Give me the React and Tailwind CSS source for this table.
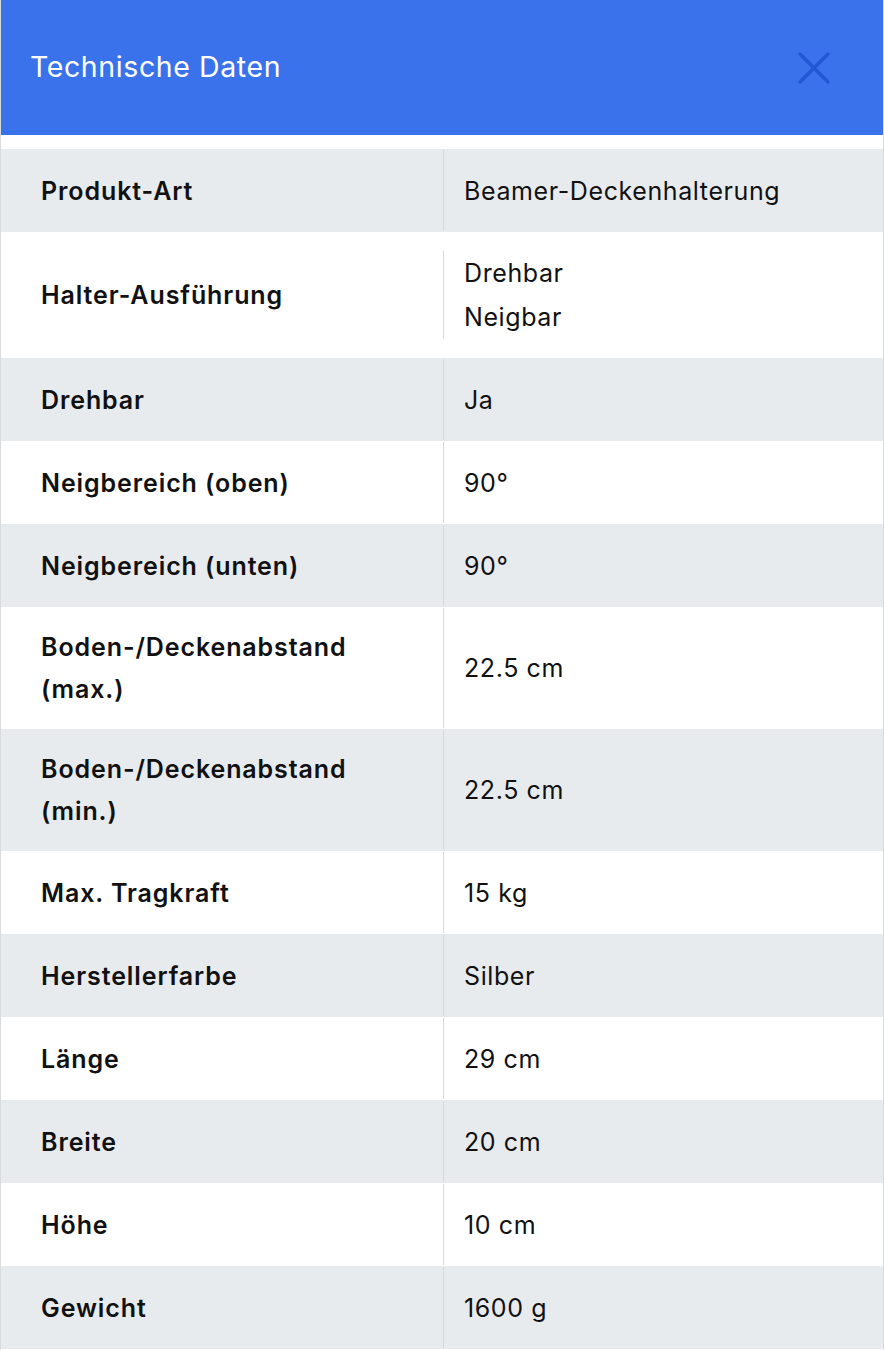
import React from "react";

const rows = [
  { label: ["Produkt-Art"], value: ["Beamer-Deckenhalterung"] },
  { label: ["Halter-Ausführung"], value: ["Drehbar", "Neigbar"] },
  { label: ["Drehbar"], value: ["Ja"] },
  { label: ["Neigbereich (oben)"], value: ["90°"] },
  { label: ["Neigbereich (unten)"], value: ["90°"] },
  { label: ["Boden-/Deckenabstand", "(max.)"], value: ["22.5 cm"] },
  { label: ["Boden-/Deckenabstand", "(min.)"], value: ["22.5 cm"] },
  { label: ["Max. Tragkraft"], value: ["15 kg"] },
  { label: ["Herstellerfarbe"], value: ["Silber"] },
  { label: ["Länge"], value: ["29 cm"] },
  { label: ["Breite"], value: ["20 cm"] },
  { label: ["Höhe"], value: ["10 cm"] },
  { label: ["Gewicht"], value: ["1600 g"] },
];

export default function App() {
  return (
    <div
      className="w-[884px] min-h-[1350px] bg-white border-x border-[#d9dcdf] text-[#111]"
      style={{ fontFamily: "Inter, 'Noto Sans', sans-serif" }}
    >
      <header className="h-[135px] bg-[#3a72eb] flex items-center justify-between pl-[29px] pr-[52px]">
        <h1 className="text-[28.5px] font-normal text-white tracking-[0.6px]">Technische Daten</h1>
        <svg width="34" height="34" viewBox="0 0 34 34" className="text-[#2356d3]">
          <path d="M3 3 L31 31 M31 3 L3 31" stroke="currentColor" strokeWidth="3.2" strokeLinecap="round" fill="none" />
        </svg>
      </header>
      <div className="h-[14px]" />
      <div className="flex flex-col">
        {rows.map((r, i) => {
          const multi = r.value.length > 1;
          return (
            <div
              key={i}
              className={`flex items-center ${i % 2 === 0 ? "bg-[#e8ebee]" : "bg-white"} ${multi ? "min-h-[126px]" : "min-h-[83px]"}`}
            >
              <div className="w-[442px] shrink-0 pl-[40px] pr-4 py-[19px] text-[25px] font-semibold leading-[42px] tracking-[0.9px]">
                {r.label.map((l, j) => (
                  <div key={j}>{l}</div>
                ))}
              </div>
              <div className={`${multi ? "" : "self-stretch py-px"} flex`}>
                <div className="border-l border-[#d5d9de] pl-[20px] flex flex-col justify-center text-[25px] leading-[44px] tracking-[0.6px] min-h-[80px]">
                  {r.value.map((v, j) => (
                    <div key={j}>{v}</div>
                  ))}
                </div>
              </div>
            </div>
          );
        })}
      </div>
    </div>
  );
}
